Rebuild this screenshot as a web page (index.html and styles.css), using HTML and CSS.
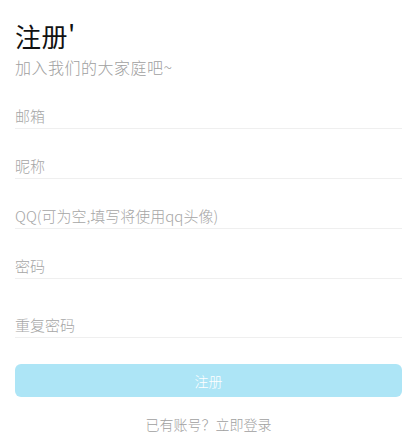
FILE: index.html
```html
<!DOCTYPE html>
<html lang="zh-CN">
<head>
<meta charset="utf-8">
<link rel="stylesheet" href="styles.css">
</head>
<body>
<div class="page">
  <header class="head">
    <h1 class="title">注册'</h1>
    <p class="subtitle">加入我们的大家庭吧~</p>
  </header>
  <form class="form">
    <input class="field" type="text" placeholder="邮箱">
    <input class="field" type="text" placeholder="昵称">
    <input class="field" type="text" placeholder="QQ(可为空,填写将使用qq头像)">
    <input class="field" type="password" placeholder="密码">
    <input class="field field-last" type="password" placeholder="重复密码">
    <button class="submit" type="button">注册</button>
  </form>
  <p class="footer">已有账号？立即登录</p>
</div>
</body>
</html>
```
FILE: styles.css
```css
html, body {
  margin: 0;
  padding: 0;
  background: #ffffff;
}
body {
  font-family: "Noto Sans CJK SC", "Noto Sans", sans-serif;
}
.page {
  padding: 0 15px;
  display: flex;
  flex-direction: column;
}
.head {
  display: flex;
  flex-direction: column;
  padding-top: 20px;
}
.title {
  margin: 0;
  font-size: 26px;
  line-height: 32px;
  font-weight: 400;
  letter-spacing: 0.5px;
  color: #111;
}
.subtitle {
  margin: 0;
  font-size: 16px;
  line-height: 30px;
  letter-spacing: 0.5px;
  font-weight: 300;
  color: #a0a0a0;
}
.form {
  display: flex;
  flex-direction: column;
  margin-top: 22px;
}
.field {
  display: block;
  box-sizing: content-box;
  height: 24px;
  padding: 0;
  margin: 0 0 25px 0;
  border: none;
  border-bottom: 1px solid #efefef;
  outline: none;
  font-family: inherit;
  font-size: 15px;
  font-weight: 300;
  line-height: 24px;
  color: #333;
  background: transparent;
}
.field::placeholder {
  color: #a6a6a6;
}
.field:nth-child(4) {
  margin-bottom: 34px;
}
.field-last {
  margin-bottom: 26px;
}
.submit {
  height: 33px;
  border: none;
  border-radius: 6px;
  background: #ade5f6;
  color: #ffffff;
  font-family: inherit;
  font-size: 14px;
  font-weight: 300;
  padding: 0;
}
.footer {
  margin: 17px 0 0;
  text-align: center;
  font-size: 14px;
  font-weight: 300;
  line-height: 20px;
  color: #a0a0a0;
}
```
